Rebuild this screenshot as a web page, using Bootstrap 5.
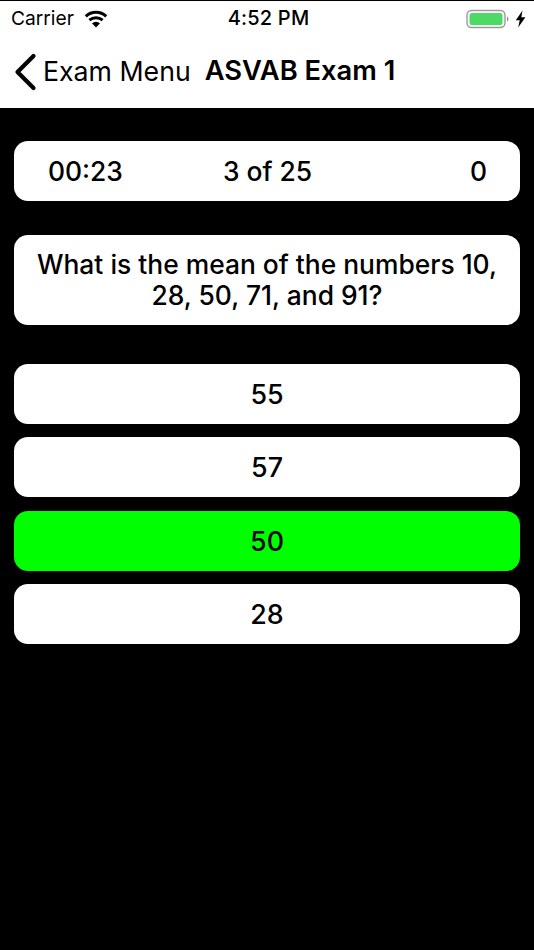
<!DOCTYPE html>
<html lang="en">
<head>
<meta charset="utf-8">
<title>ASVAB Exam 1</title>
<link rel="stylesheet" href="https://cdn.jsdelivr.net/npm/bootstrap@5.3.0/dist/css/bootstrap.min.css">
<style>
html,body{height:100%;background:#000;}
body{font-family:Inter,"Liberation Sans",sans-serif;color:#000;overflow:hidden;}
.top-area{background:#fff;height:108px;border-top:1px solid #000;}
.status-row{height:35px;padding:0 8px 0 11px;font-size:19.2px;line-height:35px;}
.status-side{flex:1 1 0;}
.carrier-gap{gap:10px;}
.battery-gap{gap:5px;}
.status-time{font-weight:500;font-size:20px;letter-spacing:.2px;}
.nav-row{height:72px;padding-left:14px;padding-bottom:1px;}
.back-label{font-size:26.7px;margin-left:6px;}
.nav-title{font-size:27.3px;font-weight:600;margin-left:14px;}
.body-area{padding:33px 14px 0;}
.pane{background:#fff;border-radius:14px;font-weight:500;font-size:26.4px;}
.timer-bar{height:60px;padding:1px 33px 0 34px;margin-bottom:34px;display:grid;grid-template-columns:1fr auto 1fr;align-items:center;}
.question{height:90px;line-height:31px;padding:0 16px;margin-bottom:39px;}
.answer{height:60px;border:0;width:100%;color:#000;font-size:26.8px;}
.answer-list{gap:13.4px;}
.picked{background:#0f0;}
</style>
</head>
<body>
<div class="top-area">
  <div class="status-row d-flex align-items-center">
    <div class="status-side d-flex align-items-center carrier-gap">
      <span>Carrier</span>
      <svg width="24" height="18" viewBox="0 0 24 18" aria-hidden="true"><path d="M1.800 6.400a14.800 14.800 0 0 1 20.400 0" fill="none" stroke="#000" stroke-width="3"/><path d="M5.400 10.200a9.800 9.800 0 0 1 13.200 0" fill="none" stroke="#000" stroke-width="3"/><path d="M8 13.200a6 6 0 0 1 8 0L12 17.500z" fill="#000"/></svg>
    </div>
    <span class="status-time">4:52 PM</span>
    <div class="status-side d-flex align-items-center justify-content-end battery-gap">
      <svg width="44" height="20" viewBox="0 0 44 20" aria-hidden="true"><rect x="1" y="1.500" width="38" height="17" rx="4.500" fill="#fff" stroke="#9a9a9a" stroke-width="1.400"/><rect x="3.500" y="4" width="33" height="12" rx="2.500" fill="#4cd964"/><path d="M41 7.500c1.800.5 1.800 4.500 0 5z" fill="#8a8a8a"/></svg>
      <svg width="11" height="18" viewBox="0 0 11 18" aria-hidden="true"><path d="M7.500 0.500 0.800 10.200h3.900L3.200 17.500 10.400 7.200H6.300z" fill="#000"/></svg>
    </div>
  </div>
  <div class="nav-row d-flex align-items-center">
    <svg width="23" height="38" viewBox="0 0 23 38" aria-hidden="true"><path d="M19.500 3 3.500 19 19.500 35" fill="none" stroke="#000" stroke-width="4.200" stroke-linecap="round" stroke-linejoin="round"/></svg>
    <span class="back-label">Exam Menu</span>
    <span class="nav-title">ASVAB Exam 1</span>
  </div>
</div>
<div class="body-area">
  <div class="pane timer-bar">
    <span>00:23</span><span>3 of 25</span><span class="text-end">0</span>
  </div>
  <div class="pane question d-flex align-items-center justify-content-center text-center">What is the mean of the numbers 10, 28, 50, 71, and 91?</div>
  <div class="answer-list d-flex flex-column">
    <button type="button" class="pane answer">55</button>
    <button type="button" class="pane answer">57</button>
    <button type="button" class="pane answer picked">50</button>
    <button type="button" class="pane answer">28</button>
  </div>
</div>
<script src="https://cdn.jsdelivr.net/npm/bootstrap@5.3.0/dist/js/bootstrap.bundle.min.js"></script>
</body>
</html>
